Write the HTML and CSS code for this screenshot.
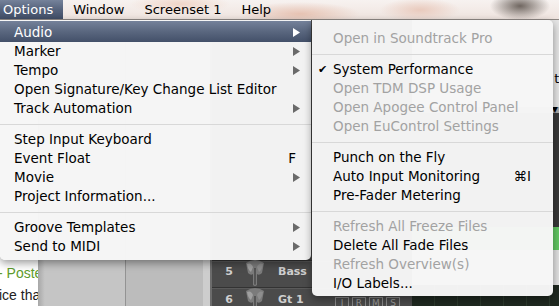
FILE: index.html
```html
<!DOCTYPE html>
<html lang="en">
  <head>
    <meta charset="UTF-8" />
    <title>Options menu</title>
    <link rel="stylesheet" href="styles.css">
  </head>
  <body>
    <div class="screen">
      <header class="menubar">
        <span class="mb-item active">Options</span>
        <span class="mb-item">Window</span>
        <span class="mb-item">Screenset 1</span>
        <span class="mb-item">Help</span>
      </header>

      <div class="desk">
        <div class="webpage">
          <span class="posted">- Poste</span>
          <span class="bodytext">ice tha</span>
        </div>
        <div class="shade"></div>
        <div class="pane pane-a"></div>
        <div class="pane pane-b"></div>
        <div class="pane-edge"></div>

        <div class="tracks">
          <div class="track-fill"></div>
          <div class="track">
            <span class="num">5</span>
            <svg class="elephant" width="20" height="28" viewBox="0 0 20 28">
              <path d="M1 4 Q10 -2 19 4 L17 14 Q14 17 12 15 L12 26 Q10 28 8 26 L8 15 Q6 17 3 14 Z" fill="#7b7b7b"/>
              <path d="M9 9 L9 25 Q10 27 11 25 L11 9 Z" fill="#555"/>
              <path d="M2 5 Q6 3 8 8 L6 13 Q3 11 2 5 Z" fill="#a0a0a0"/>
              <path d="M18 5 Q14 3 12 8 L14 13 Q17 11 18 5 Z" fill="#8e8e8e"/>
            </svg>
            <span class="name">Bass</span>
          </div>
          <div class="track">
            <span class="num">6</span>
            <svg class="elephant" width="20" height="28" viewBox="0 0 20 28">
              <path d="M1 4 Q10 -2 19 4 L17 14 Q14 17 12 15 L12 26 Q10 28 8 26 L8 15 Q6 17 3 14 Z" fill="#7b7b7b"/>
              <path d="M9 9 L9 25 Q10 27 11 25 L11 9 Z" fill="#555"/>
              <path d="M2 5 Q6 3 8 8 L6 13 Q3 11 2 5 Z" fill="#a0a0a0"/>
              <path d="M18 5 Q14 3 12 8 L14 13 Q17 11 18 5 Z" fill="#8e8e8e"/>
            </svg>
            <span class="name">Gt 1</span>
            <span class="btns">
              <span class="tbtn">I</span>
              <span class="tbtn">R</span>
              <span class="tbtn">M</span>
              <span class="tbtn">S</span>
            </span>
          </div>
        </div>

        <div class="arrange">
          <div class="ar-top"><span>ti</span></div>
          <div class="ar-bar">&#9660;</div>
          <div class="ar-dark"></div>
          <div class="ar-green"></div>
          <div class="ar-light"></div>
          <div class="ar-bottom"></div>
        </div>
      </div>

      <div class="menu main-menu">
        <div class="item hl">Audio <svg class="arrow" width="7" height="9"><polygon points="0,0 7,4.5 0,9"/></svg></div>
        <div class="item">Marker <svg class="arrow" width="7" height="9"><polygon points="0,0 7,4.5 0,9"/></svg></div>
        <div class="item">Tempo <svg class="arrow" width="7" height="9"><polygon points="0,0 7,4.5 0,9"/></svg></div>
        <div class="item">Open Signature/Key Change List Editor</div>
        <div class="item">Track Automation <svg class="arrow" width="7" height="9"><polygon points="0,0 7,4.5 0,9"/></svg></div>
        <div class="sep"></div>
        <div class="item">Step Input Keyboard</div>
        <div class="item">Event Float <span class="key">F</span></div>
        <div class="item">Movie <svg class="arrow" width="7" height="9"><polygon points="0,0 7,4.5 0,9"/></svg></div>
        <div class="item">Project Information...</div>
        <div class="sep"></div>
        <div class="item">Groove Templates <svg class="arrow" width="7" height="9"><polygon points="0,0 7,4.5 0,9"/></svg></div>
        <div class="item">Send to MIDI <svg class="arrow" width="7" height="9"><polygon points="0,0 7,4.5 0,9"/></svg></div>
      </div>

      <div class="menu submenu">
        <div class="item off"><span class="mark"></span>Open in Soundtrack Pro</div>
        <div class="sep"></div>
        <div class="item"><span class="mark">&#10004;</span>System Performance</div>
        <div class="item off"><span class="mark"></span>Open TDM DSP Usage</div>
        <div class="item off"><span class="mark"></span>Open Apogee Control Panel</div>
        <div class="item off"><span class="mark"></span>Open EuControl Settings</div>
        <div class="sep"></div>
        <div class="item"><span class="mark"></span>Punch on the Fly</div>
        <div class="item"><span class="mark"></span><span class="grow">Auto Input Monitoring</span><span class="key">&#8984;I</span></div>
        <div class="item"><span class="mark"></span>Pre-Fader Metering</div>
        <div class="sep"></div>
        <div class="item off"><span class="mark"></span>Refresh All Freeze Files</div>
        <div class="item"><span class="mark"></span>Delete All Fade Files</div>
        <div class="item off"><span class="mark"></span>Refresh Overview(s)</div>
        <div class="item"><span class="mark"></span>I/O Labels...</div>
      </div>
    </div>
  </body>
</html>
```

FILE: styles.css
```css
* {
  margin: 0;
  padding: 0;
  box-sizing: border-box;
}

body {
  width: 559px;
  height: 306px;
  overflow: hidden;
  font-family: "DejaVu Sans", sans-serif;
  background-color: #4a4a4a;
}

.screen {
  position: relative;
  width: 559px;
  height: 306px;
  overflow: hidden;
}

/* top menu bar over a blurred desktop photo */
.menubar {
  height: 20px;
  display: flex;
  align-items: stretch;
  border-bottom: 1px solid #8f8985;
  background-color: #f2ebe8;
  background-image:
    radial-gradient(ellipse 30px 14px at 520px 6px, #6f6660 0%, rgba(111, 102, 96, 0) 100%),
    radial-gradient(ellipse 60px 12px at 300px 14px, #e7c3b3 0%, rgba(231, 195, 179, 0) 100%),
    radial-gradient(ellipse 50px 10px at 180px 4px, #f0d5c8 0%, rgba(240, 213, 200, 0) 100%),
    radial-gradient(ellipse 40px 12px at 420px 10px, #e9cabd 0%, rgba(233, 202, 189, 0) 100%),
    linear-gradient(180deg, #f7f2f0 0%, #efe4df 100%);
  font-size: 13px;
  color: #000;
}

.mb-item {
  padding: 0 10px 0 10px;
  line-height: 19px;
  white-space: nowrap;
}

.mb-item.active {
  padding: 0 10px 0 3px;
  color: #fff;
  background-image: linear-gradient(180deg, #75829a 0%, #56637c 50%, #414e67 100%);
}

/* application underneath */
.desk {
  height: 286px;
  display: flex;
}

.webpage {
  width: 38px;
  background-color: #fff;
  display: flex;
  flex-direction: column;
  justify-content: flex-end;
  overflow: hidden;
  white-space: nowrap;
  padding-bottom: 1px;
  font-family: "Liberation Sans", Arial, sans-serif;
}

.posted {
  color: #5d9b2b;
  font-size: 14px;
  line-height: 23px;
  margin-left: -2px;
}

.bodytext {
  color: #222;
  font-size: 14px;
  line-height: 20px;
  margin-left: -1px;
}

.shade {
  width: 7px;
  background-image: linear-gradient(90deg, #a7a7a7 0%, #c6c6c6 100%);
}

.pane {
  border-right: 1px solid #939393;
}

.pane-a {
  width: 81px;
  background-color: #c5c5c5;
}

.pane-b {
  width: 77px;
  background-color: #bcbcbc;
  border-right: none;
}

.pane-edge {
  width: 9px;
  background-color: #cdcdcd;
  border-right: 2px solid #6c6c6c;
}

.tracks {
  width: 200px;
  background-color: #4b4b4b;
  display: flex;
  flex-direction: column;
}

.track-fill {
  flex: 1;
}

.track {
  height: 27px;
  display: flex;
  align-items: flex-start;
  padding-top: 3px;
  border-top: 1px solid #333;
  box-shadow: inset 0 1px 0 #5a5a5a;
  color: #cfcfcf;
  font-size: 11px;
  font-weight: bold;
  line-height: 16px;
}

.track:first-of-type {
  border-top: none;
}

.track:last-child {
  height: 19px;
  padding-top: 4px;
}

.num {
  width: 33px;
  text-align: right;
  padding-right: 12px;
}

.elephant {
  margin-top: -5px;
  margin-right: 13px;
}

.name {
  width: 57px;
}

.btns {
  display: flex;
  gap: 3px;
  margin-top: 5px;
}

.tbtn {
  width: 14px;
  height: 12px;
  border: 1px solid #8a8a8a;
  color: #9a9a9a;
  font-size: 9px;
  line-height: 10px;
  text-align: center;
  font-weight: normal;
}

.arrange {
  flex: 1;
  display: flex;
  flex-direction: column;
  justify-content: flex-start;
}

.ar-top {
  height: 87px;
  background-color: #e5e5e5;
  display: flex;
  justify-content: flex-end;
  align-items: center;
  font-size: 13px;
  padding-top: 30px;
  overflow: hidden;
}

.ar-top span {
  margin-right: -4px;
}

.ar-bar {
  height: 6px;
  background-color: #a9a9a9;
  font-size: 8px;
  line-height: 6px;
  text-align: right;
  padding-right: 1px;
  overflow: hidden;
}

.ar-dark {
  height: 114px;
  background-color: #393939;
}

.ar-green {
  height: 23px;
  background-color: #62c763;
}

.ar-light {
  height: 35px;
  background-color: #e2e2e2;
}

.ar-bottom {
  flex: 1;
  background-color: #1f2920;
  background-image: repeating-linear-gradient(90deg, #1f2920 0px, #1f2920 22px, #2c3a2d 22px, #2c3a2d 23px);
}

/* menus, lying over the app */
.menu {
  position: absolute;
  top: 20px;
  background-color: rgba(246, 246, 246, 0.98);
  font-size: 13.5px;
  color: #000;
  box-shadow: 0 3px 9px rgba(0, 0, 0, 0.4);
}

.main-menu {
  left: 0;
  width: 311px;
  padding: 1px 0 4px;
  border-radius: 0 0 5px 5px;
}

.submenu {
  left: 312px;
  width: 241px;
  padding: 9px 0 3px;
  border-radius: 0 5px 5px 5px;
}

.item {
  height: 19px;
  line-height: 19px;
  padding: 0 11px 0 14px;
  display: flex;
  align-items: center;
  justify-content: space-between;
  white-space: nowrap;
}

.item.hl {
  height: 21px;
  padding-top: 2px;
  color: #fff;
  background-image: linear-gradient(180deg, #74819a 0%, #5a677f 50%, #435069 100%);
}

.arrow {
  fill: #6a6a6a;
}

.item.hl .arrow {
  fill: #fff;
}

.key {
  padding-right: 4px;
}

.submenu .item {
  justify-content: flex-start;
  padding: 0 18px 0 6px;
}

.mark {
  width: 15px;
  font-size: 11px;
}

.grow {
  flex: 1;
}

.item.off {
  color: #a2a2a2;
}

.sep {
  height: 12px;
  display: flex;
  align-items: center;
}

.sep::after {
  content: "";
  flex: 1;
  height: 1px;
  background-color: #d8d8d8;
}
```
